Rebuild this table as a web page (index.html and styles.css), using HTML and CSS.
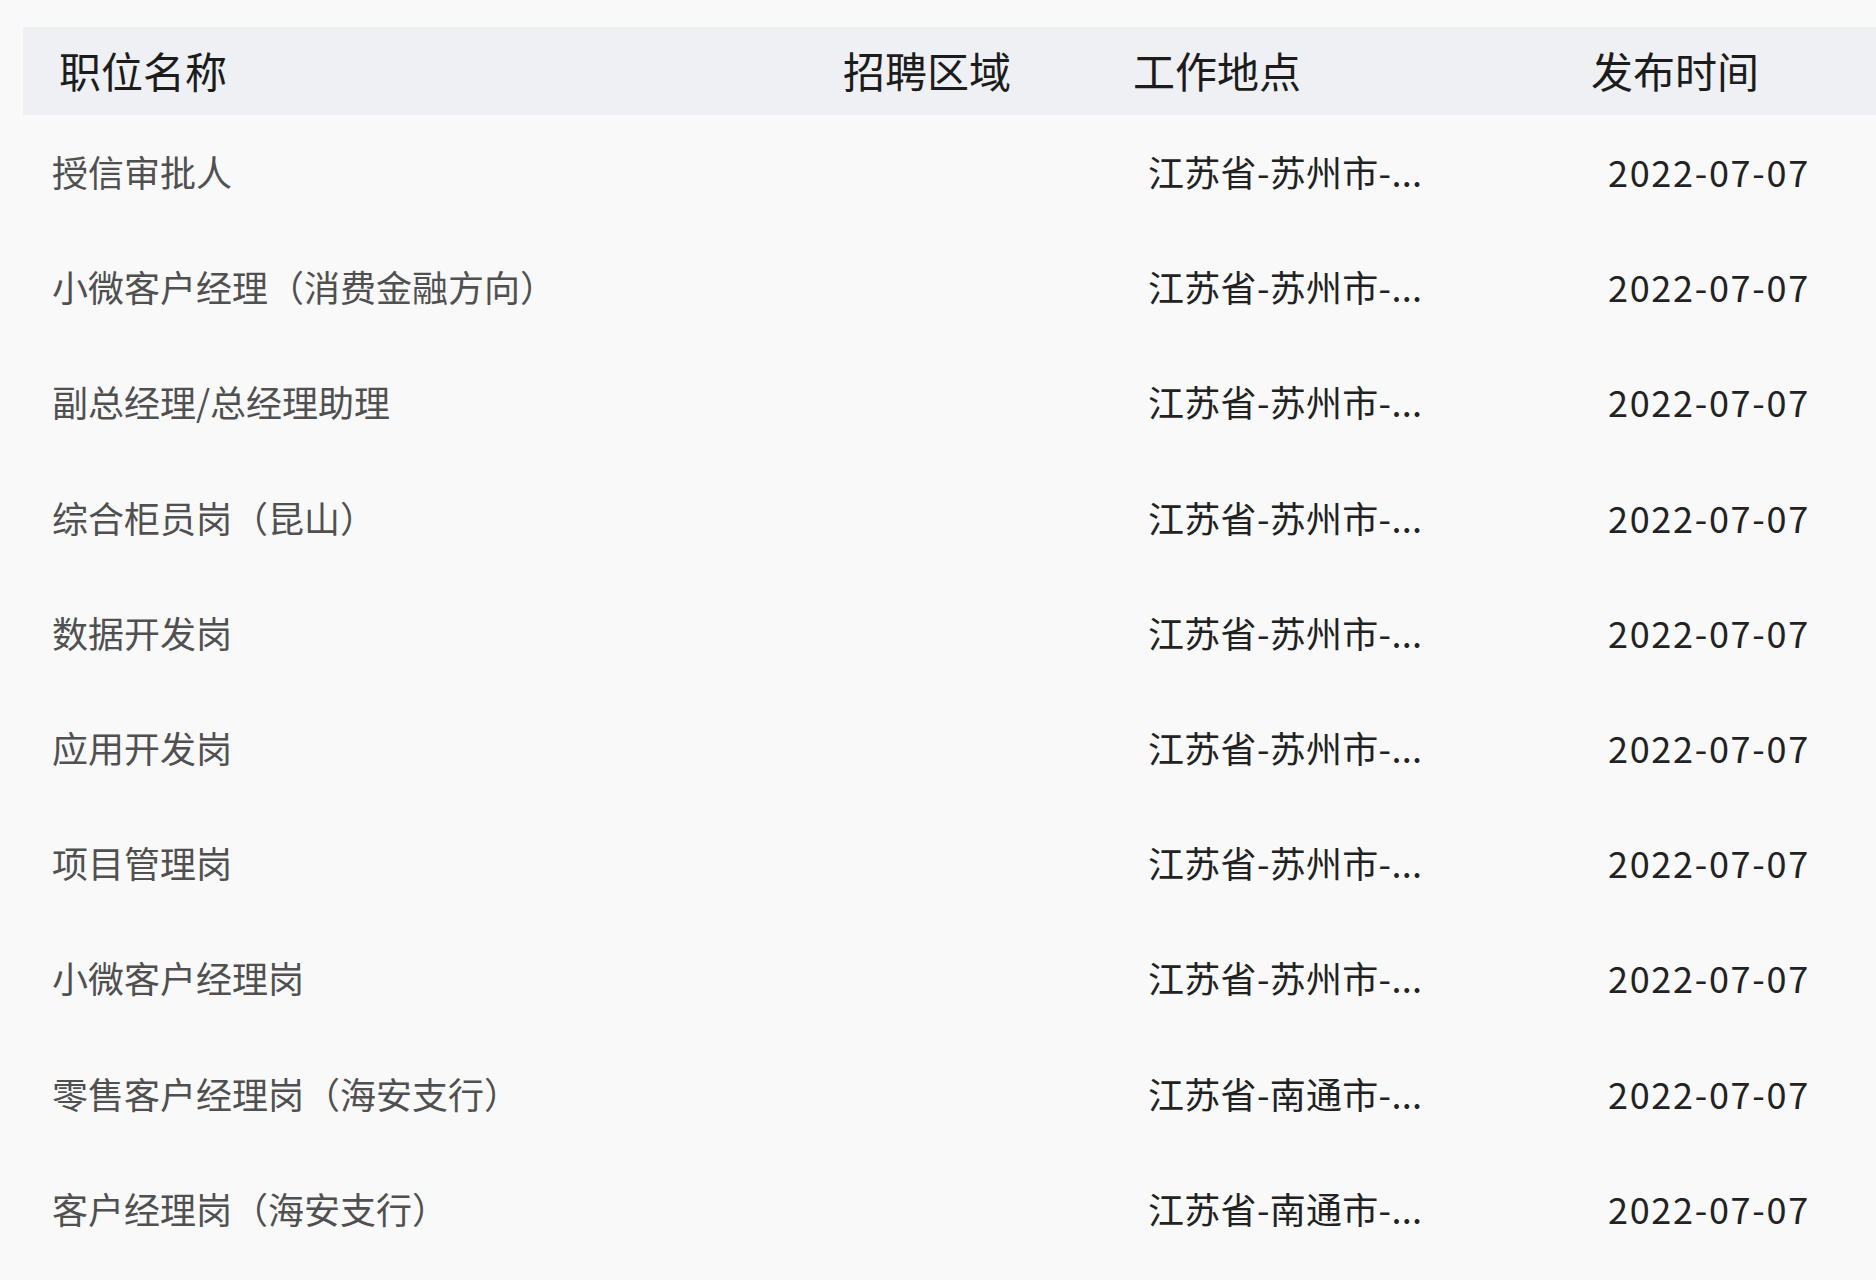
FILE: index.html
```html
<!DOCTYPE html>
<html lang="zh-CN">
<head>
<meta charset="utf-8">
<title>职位列表</title>
<link rel="stylesheet" href="styles.css">
</head>
<body>
<div class="page">
  <div class="table">
    <div class="row head">
      <div class="cell c1">职位名称</div>
      <div class="cell c2">招聘区域</div>
      <div class="cell c3">工作地点</div>
      <div class="cell c4">发布时间</div>
    </div>
    <div class="row item">
      <div class="cell c1">授信审批人</div>
      <div class="cell c2"></div>
      <div class="cell c3">江苏省-苏州市-...</div>
      <div class="cell c4">2022-07-07</div>
    </div>
    <div class="row item">
      <div class="cell c1">小微客户经理（消费金融方向）</div>
      <div class="cell c2"></div>
      <div class="cell c3">江苏省-苏州市-...</div>
      <div class="cell c4">2022-07-07</div>
    </div>
    <div class="row item">
      <div class="cell c1">副总经理/总经理助理</div>
      <div class="cell c2"></div>
      <div class="cell c3">江苏省-苏州市-...</div>
      <div class="cell c4">2022-07-07</div>
    </div>
    <div class="row item">
      <div class="cell c1">综合柜员岗（昆山）</div>
      <div class="cell c2"></div>
      <div class="cell c3">江苏省-苏州市-...</div>
      <div class="cell c4">2022-07-07</div>
    </div>
    <div class="row item">
      <div class="cell c1">数据开发岗</div>
      <div class="cell c2"></div>
      <div class="cell c3">江苏省-苏州市-...</div>
      <div class="cell c4">2022-07-07</div>
    </div>
    <div class="row item">
      <div class="cell c1">应用开发岗</div>
      <div class="cell c2"></div>
      <div class="cell c3">江苏省-苏州市-...</div>
      <div class="cell c4">2022-07-07</div>
    </div>
    <div class="row item">
      <div class="cell c1">项目管理岗</div>
      <div class="cell c2"></div>
      <div class="cell c3">江苏省-苏州市-...</div>
      <div class="cell c4">2022-07-07</div>
    </div>
    <div class="row item">
      <div class="cell c1">小微客户经理岗</div>
      <div class="cell c2"></div>
      <div class="cell c3">江苏省-苏州市-...</div>
      <div class="cell c4">2022-07-07</div>
    </div>
    <div class="row item">
      <div class="cell c1">零售客户经理岗（海安支行）</div>
      <div class="cell c2"></div>
      <div class="cell c3">江苏省-南通市-...</div>
      <div class="cell c4">2022-07-07</div>
    </div>
    <div class="row item">
      <div class="cell c1">客户经理岗（海安支行）</div>
      <div class="cell c2"></div>
      <div class="cell c3">江苏省-南通市-...</div>
      <div class="cell c4">2022-07-07</div>
    </div>
  </div>
</div>
</body>
</html>
```

FILE: styles.css
```css
html, body {
  margin: 0;
  padding: 0;
  background: #f9f9fa;
}

body {
  font-family: "Noto Sans CJK SC", "Noto Sans", sans-serif;
  color: #1f1f1f;
  width: 1876px;
  height: 1280px;
  overflow: hidden;
}

.page {
  padding: 27px 0 0 23px;
}

.row {
  display: grid;
  grid-template-columns: 820px 290px 458px 1fr;
  align-items: center;
}

.cell {
  white-space: nowrap;
}

.head {
  box-sizing: border-box;
  height: 88px;
  padding-bottom: 3px;
  background: #eef0f3;
  font-size: 42px;
  color: #1c1c1c;
}

.head .c1 {
  padding-left: 36px;
}

.item {
  box-sizing: border-box;
  height: 115.2px;
  padding-bottom: 3px;
  font-size: 36px;
  color: #222222;
}

.item .c1 {
  padding-left: 29px;
  color: #505050;
}

.item .c3 {
  padding-left: 15px;
  letter-spacing: 0.3px;
}

.item .c4 {
  padding-left: 17px;
  letter-spacing: 1.7px;
}
```
